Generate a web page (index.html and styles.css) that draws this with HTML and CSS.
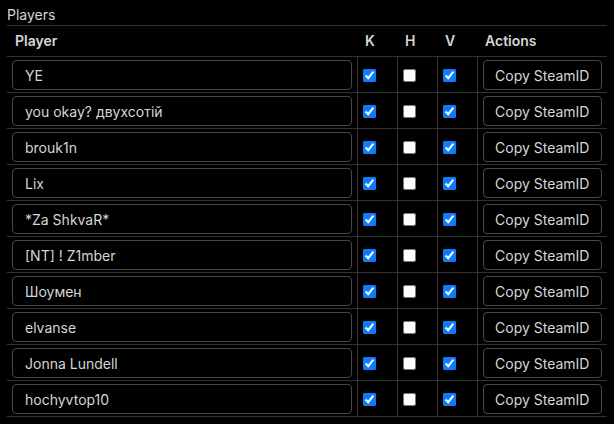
FILE: index.html
```html
<!DOCTYPE html>
<html lang="en">
<head>
	<meta charset="utf-8">
	<title>Players</title>
	<link rel="stylesheet" href="styles.css">
</head>
<body>
<div class="panel">
	<div class="caption">Players</div>
	<table class="players">
		<thead>
			<tr>
				<th class="col-name">Player</th>
				<th class="col-flag">K</th>
				<th class="col-flag">H</th>
				<th class="col-flag">V</th>
				<th class="col-actions">Actions</th>
			</tr>
		</thead>
		<tbody>
			<tr>
				<td><input class="name" type="text" value="YE"></td>
				<td><input type="checkbox" checked></td>
				<td><input type="checkbox"></td>
				<td><input type="checkbox" checked></td>
				<td><button>Copy SteamID</button></td>
			</tr>
			<tr>
				<td><input class="name" type="text" value="you okay? двухсотій"></td>
				<td><input type="checkbox" checked></td>
				<td><input type="checkbox"></td>
				<td><input type="checkbox" checked></td>
				<td><button>Copy SteamID</button></td>
			</tr>
			<tr>
				<td><input class="name" type="text" value="brouk1n"></td>
				<td><input type="checkbox" checked></td>
				<td><input type="checkbox"></td>
				<td><input type="checkbox" checked></td>
				<td><button>Copy SteamID</button></td>
			</tr>
			<tr>
				<td><input class="name" type="text" value="Lix"></td>
				<td><input type="checkbox" checked></td>
				<td><input type="checkbox"></td>
				<td><input type="checkbox" checked></td>
				<td><button>Copy SteamID</button></td>
			</tr>
			<tr>
				<td><input class="name" type="text" value="*Za ShkvaR*"></td>
				<td><input type="checkbox" checked></td>
				<td><input type="checkbox"></td>
				<td><input type="checkbox" checked></td>
				<td><button>Copy SteamID</button></td>
			</tr>
			<tr>
				<td><input class="name" type="text" value="[NT] ! Z1mber"></td>
				<td><input type="checkbox" checked></td>
				<td><input type="checkbox"></td>
				<td><input type="checkbox" checked></td>
				<td><button>Copy SteamID</button></td>
			</tr>
			<tr>
				<td><input class="name" type="text" value="Шоумен"></td>
				<td><input type="checkbox" checked></td>
				<td><input type="checkbox"></td>
				<td><input type="checkbox" checked></td>
				<td><button>Copy SteamID</button></td>
			</tr>
			<tr>
				<td><input class="name" type="text" value="elvanse"></td>
				<td><input type="checkbox" checked></td>
				<td><input type="checkbox"></td>
				<td><input type="checkbox" checked></td>
				<td><button>Copy SteamID</button></td>
			</tr>
			<tr>
				<td><input class="name" type="text" value="Jonna Lundell"></td>
				<td><input type="checkbox" checked></td>
				<td><input type="checkbox"></td>
				<td><input type="checkbox" checked></td>
				<td><button>Copy SteamID</button></td>
			</tr>
			<tr>
				<td><input class="name" type="text" value="hochyvtop10"></td>
				<td><input type="checkbox" checked></td>
				<td><input type="checkbox"></td>
				<td><input type="checkbox" checked></td>
				<td><button>Copy SteamID</button></td>
			</tr>
		</tbody>
	</table>
</div>
</body>
</html>
```

FILE: styles.css
```css
:root
{
	--bg: #000;
	--fg: #d6d6d6;
	--line: #333;
	--field-border: #474747;
	--check: #0a7cff;
}

html,
body
{
	margin: 0;
	padding: 0;
	background: var(--bg);
}

body
{
	color: var(--fg);
	font-family: Inter, "Noto Sans", sans-serif;
	font-size: 14px;
	line-height: 1.2;
}

.panel
{
	width: 600px;
	padding: 5px 7px 0;
}

.caption
{
	height: 20px;
	line-height: 20px;
	border-bottom: 1px solid var(--line);
}

.players
{
	width: 600px;
	border-collapse: collapse;
	table-layout: fixed;
}

/* widths are content widths; th padding adds 16px each */
.col-name
{
	width: 334px;
}

.col-flag
{
	width: 24px;
}

.col-actions
{
	width: 114px;
}

th
{
	height: 30px;
	padding: 0 8px;
	border-bottom: 1px solid var(--line);
	font-weight: 600;
	text-align: left;
}

td
{
	height: 31px;
	padding: 3px 5px 1px;
	border-bottom: 1px solid var(--line);
	vertical-align: top;
}

td + td
{
	border-left: 1px solid var(--line);
}

input.name,
button
{
	box-sizing: border-box;
	height: 30px;
	border: 1px solid var(--field-border);
	border-radius: 4px;
	background: transparent;
	color: var(--fg);
	font-family: inherit;
	font-size: 14px;
}

input.name
{
	width: 100%;
	padding: 0 12px;
}

button
{
	width: 100%;
	padding: 0;
	text-align: center;
}

input[type="checkbox"]
{
	width: 13px;
	height: 13px;
	margin: 9px 0 0;
	accent-color: var(--check);
}
```
